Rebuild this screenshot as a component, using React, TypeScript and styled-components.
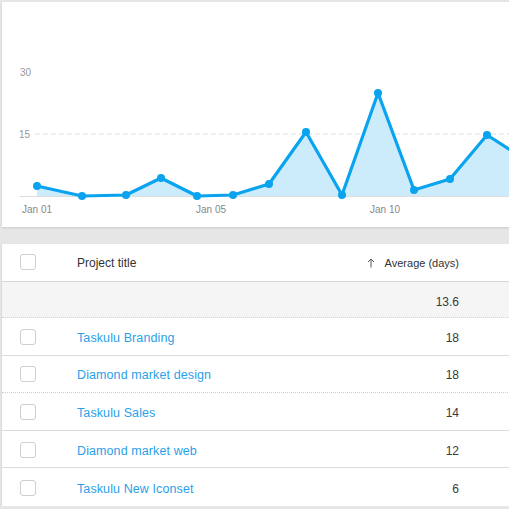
import styled, { createGlobalStyle } from 'styled-components'

const GlobalStyle = createGlobalStyle`
    html, body {
        margin: 0;
        padding: 0;
        background: #e6e6e6;
        overflow: hidden;
        font-family: "Liberation Sans", Arial, sans-serif;
    }
`

const points: [number, number][] = [
    [37, 186], [82, 196], [126, 195], [161, 178], [197, 196], [233, 195], [269, 184],
    [306, 132], [342, 195], [378, 93], [414, 190], [450, 179], [487, 135], [523, 158],
]

const rows = [
    { title: 'Taskulu Branding', avg: 18, dotted: false },
    { title: 'Diamond market design', avg: 18, dotted: true },
    { title: 'Taskulu Sales', avg: 14, dotted: false },
    { title: 'Diamond market web', avg: 12, dotted: false },
    { title: 'Taskulu New Iconset', avg: 6, dotted: false },
]

function Chart() {
    const line = points.map(p => p.join(',')).join(' ')
    const last = points[points.length - 1]
    const area = `${line} ${last[0]},196 37,196`
    return (
        <svg width="520" height="225" viewBox="2 2 520 225">
            <text x="20" y="76" fontSize="10" fill="#999">30</text>
            <text x="19" y="138" fontSize="10" fill="#999">15</text>
            <line x1="35" y1="134" x2="522" y2="134" stroke="#ddd" strokeDasharray="5 3" />
            <line x1="20" y1="196.5" x2="522" y2="196.5" stroke="#ddd" />
            <polygon points={area} fill="#cdecfb" />
            <polyline points={line} fill="none" stroke="#0aa3ef" strokeWidth="3.2" strokeLinejoin="round" />
            {points.map(([x, y]) => (
                <circle key={x} cx={x} cy={y} r="4" fill="#0aa3ef" />
            ))}
            <text x="37" y="213" fontSize="10" fill="#888" textAnchor="middle">Jan 01</text>
            <text x="211" y="213" fontSize="10" fill="#888" textAnchor="middle">Jan 05</text>
            <text x="385" y="213" fontSize="10" fill="#888" textAnchor="middle">Jan 10</text>
        </svg>
    )
}

function SortArrow() {
    return (
        <ArrowIcon width="8" height="10" viewBox="0 0 8 10">
            <path d="M4 9.5V1M1 4l3-3 3 3" fill="none" stroke="#555" strokeWidth="1" />
        </ArrowIcon>
    )
}

export default function App() {
    return (
        <Page>
            <GlobalStyle />
            <ChartCard>
                <Chart />
            </ChartCard>
            <TableCard>
                <HeaderRow>
                    <Cell><Checkbox /></Cell>
                    <HeadText>Project title</HeadText>
                    <NumCell>
                        <SortArrow />
                        <AvgLabel>Average (days)</AvgLabel>
                    </NumCell>
                </HeaderRow>
                <SummaryRow>
                    <Cell />
                    <Cell />
                    <NumCell>13.6</NumCell>
                </SummaryRow>
                {rows.map(r => (
                    <Row key={r.title} $dotted={r.dotted}>
                        <Cell><Checkbox /></Cell>
                        <TitleLink>{r.title}</TitleLink>
                        <NumCell>{r.avg}</NumCell>
                    </Row>
                ))}
            </TableCard>
        </Page>
    )
}

const Page = styled.div`
    padding: 2px 0 0 2px;
    width: 540px;
    display: flex;
    flex-direction: column;
    gap: 17px;
`

const ChartCard = styled.div`
    width: 520px;
    height: 225px;
    background: #fff;
    box-shadow: 0 1px 2px rgba(0, 0, 0, 0.12);
    svg {
        display: block;
    }
`

const TableCard = styled.div`
    width: 520px;
    background: #fff;
    box-shadow: 0 1px 2px rgba(0, 0, 0, 0.12);
    display: flex;
    flex-direction: column;
`

const BaseRow = styled.div`
    display: grid;
    grid-template-columns: 75px 310px 72px;
    align-items: center;
    box-sizing: border-box;
    padding-top: 3px;
    font-size: 12px;
    color: #3a3a3a;
`

const HeaderRow = styled(BaseRow)`
    height: 38px;
    padding-top: 1px;
    border-bottom: 1px solid #d6d6d6;
`

const SummaryRow = styled(BaseRow)`
    height: 36px;
    padding-top: 4px;
    background: #f5f5f5;
    border-bottom: 1px dotted #d0d0d0;
`

const Row = styled(BaseRow)<{ $dotted: boolean }>`
    height: 37.6px;
    border-bottom: 1px ${p => (p.$dotted ? 'dotted #cfcfcf' : 'solid #dcdcdc')};
    &:last-child {
        border-bottom: none;
    }
`

const Cell = styled.div`
    display: flex;
    align-items: center;
    padding-left: 18px;
    &:nth-child(2) {
        padding-left: 0;
    }
`

const Checkbox = styled.span`
    width: 14px;
    height: 14px;
    margin-top: -2px;
    border: 1.5px solid #cfcfcf;
    border-radius: 3px;
    background: #fff;
    display: block;
`

const HeadText = styled.div`
    font-size: 12px;
    color: #333;
`

const TitleLink = styled.div`
    font-size: 12.5px;
    color: #2a9fea;
    letter-spacing: 0.1px;
`

const NumCell = styled.div`
    display: flex;
    justify-content: flex-end;
    align-items: center;
    white-space: nowrap;
    font-size: 12px;
    color: #3a3a3a;
`

const ArrowIcon = styled.svg`
    display: block;
    flex-shrink: 0;
    margin-right: 10px;
    margin-top: -1px;
`

const AvgLabel = styled.span`
    flex-shrink: 0;
    font-size: 11px;
    color: #333;
`
